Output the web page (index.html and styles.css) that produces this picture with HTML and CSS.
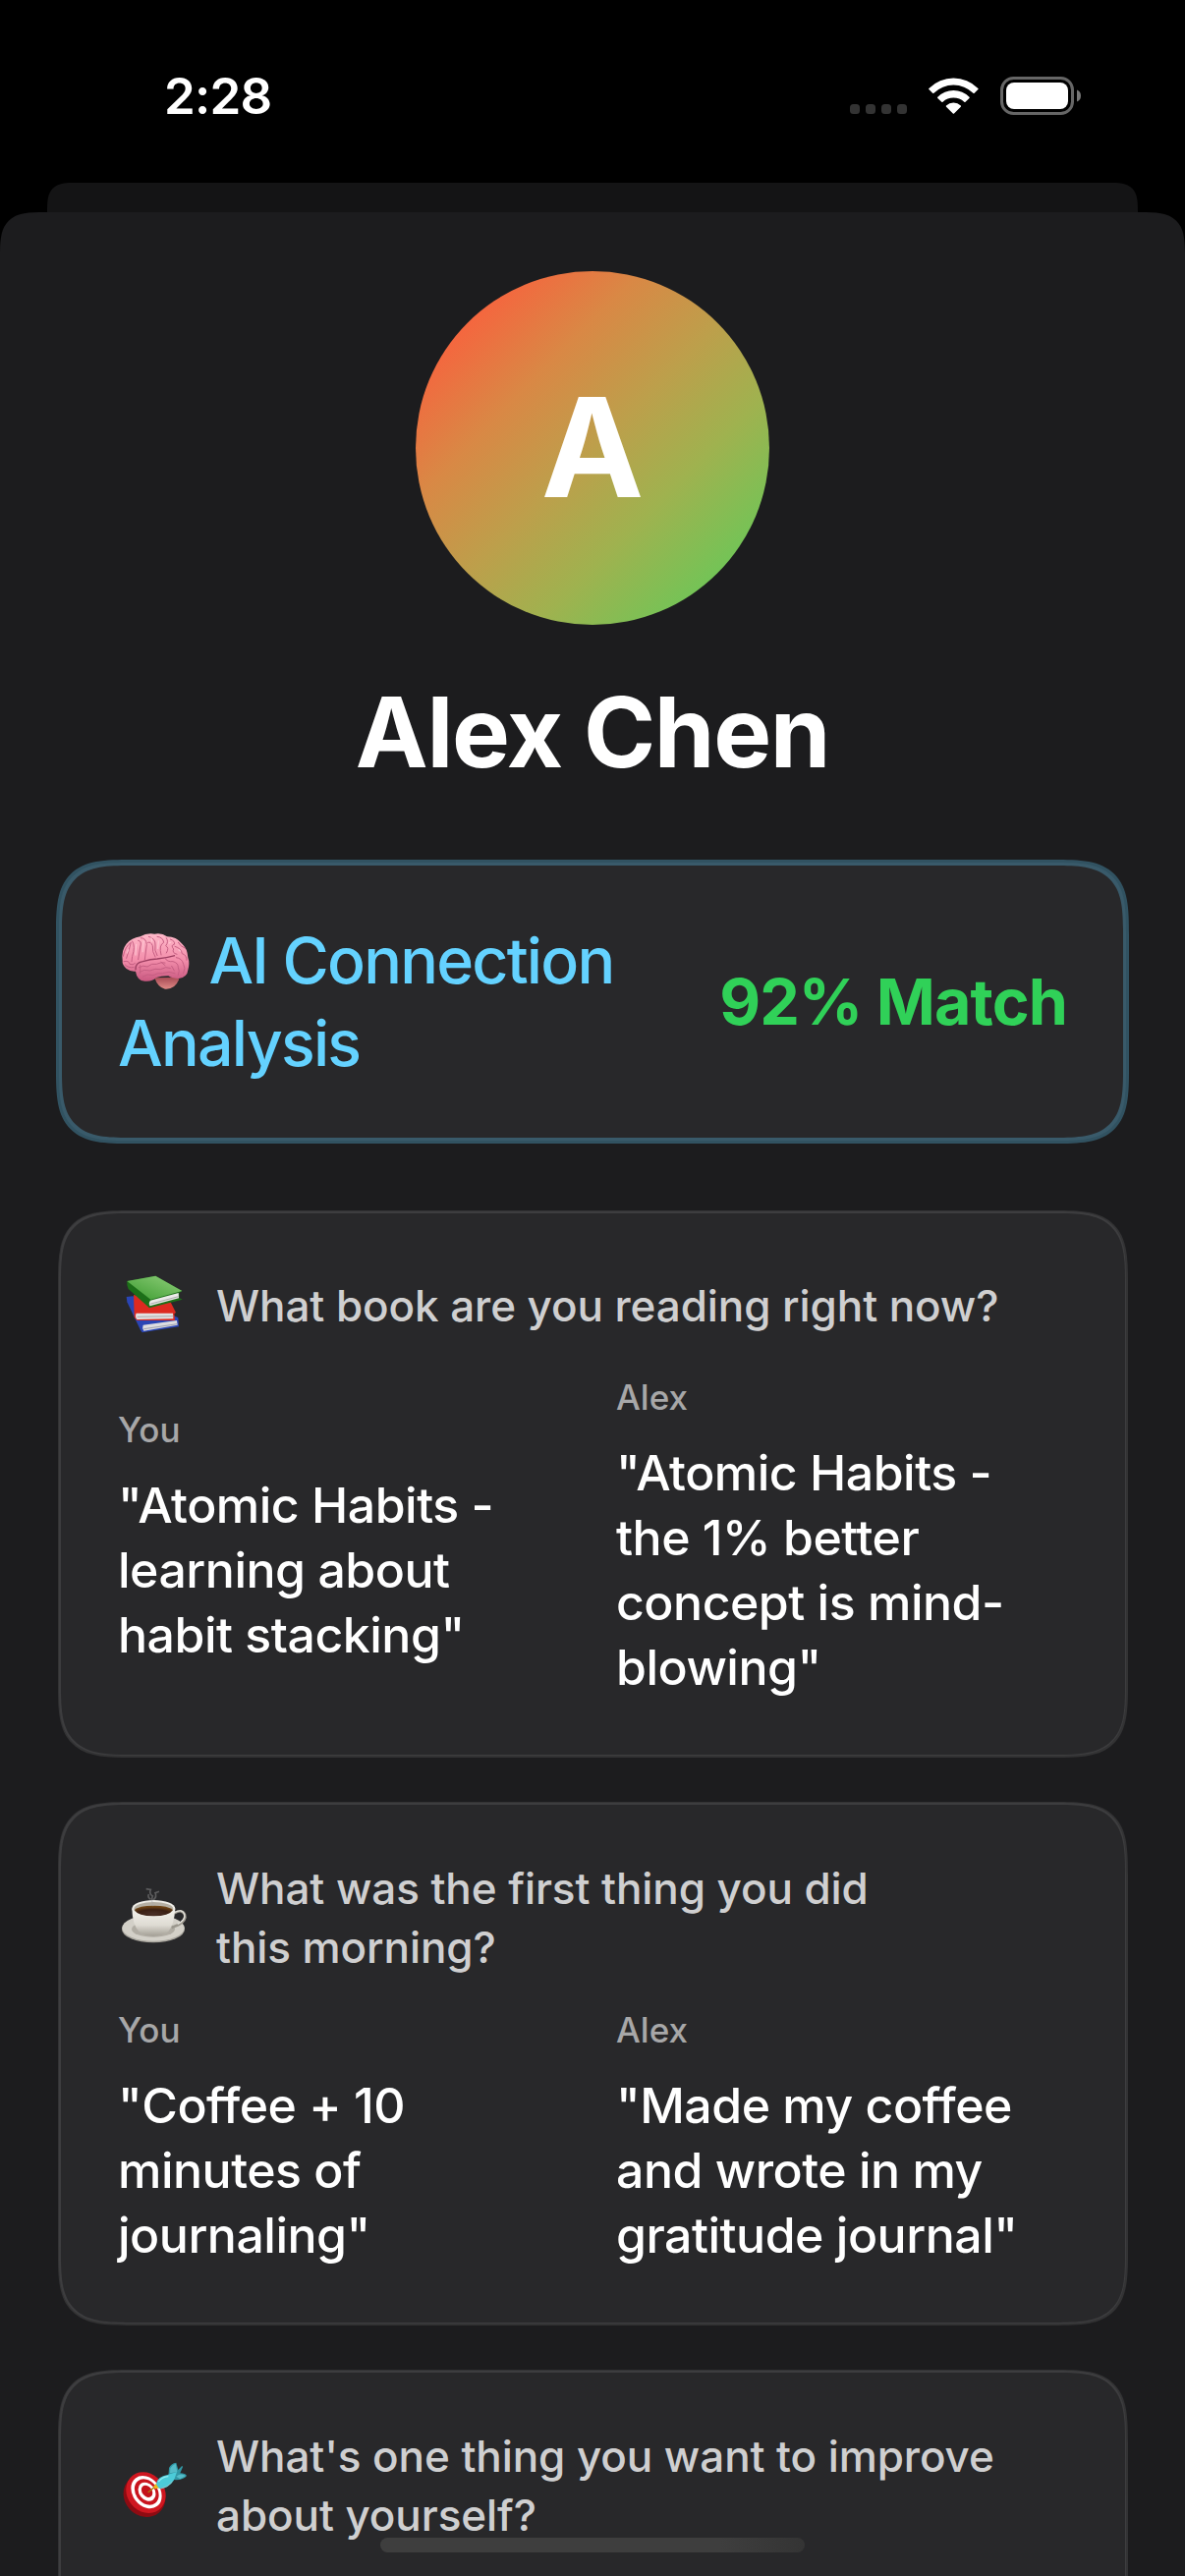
FILE: index.html
```
<!DOCTYPE html>
<html lang="en">
<head>
<meta charset="utf-8">
<title>Alex Chen</title>
<link rel="stylesheet" href="styles.css">
</head>
<body>
<div class="screen">
  <header class="status-bar">
    <span class="time">2:28</span>
    <svg class="status-icons" viewBox="0 0 235 39" width="235" height="39" aria-hidden="true">
      <g fill="#333">
        <rect x="0" y="28" width="10" height="10" rx="3.5"/>
        <rect x="16" y="28" width="10" height="10" rx="3.5"/>
        <rect x="32" y="28" width="10" height="10" rx="3.5"/>
        <rect x="48" y="28" width="10" height="10" rx="3.5"/>
      </g>
      <g fill="#fff" transform="translate(80 1)">
        <path d="M.4 10.9A35.5 35.5 0 0 1 50.4 10.9Q51 11.4 50.4 12L46.700 15.700Q46 16.200 45.400 15.700A28.500 28.500 0 0 0 5.400 15.700Q4.800 16.200 4.100 15.700L.4 12Q-.2 11.400 .4 10.900Z"/>
        <path d="M9.300 19.800A22.700 22.700 0 0 1 41.500 19.800Q42.100 20.300 41.500 20.900L37.500 24.800Q36.900 25.300 36.300 24.800A16.200 16.200 0 0 0 14.500 24.800Q13.900 25.300 13.300 24.800L9.300 20.900Q8.700 20.300 9.300 19.800Z"/>
        <path d="M18 28.500A10.500 10.500 0 0 1 32.800 28.500Q33.400 29 32.800 29.700L26 36.500Q25.400 37 24.800 36.500L18 29.700Q17.400 29 18 28.500Z"/>
      </g>
      <rect x="154.500" y="1.500" width="72" height="36" rx="12" fill="none" stroke="#666" stroke-width="3"/>
      <rect x="159" y="6" width="63" height="27" rx="8" fill="#fff"/>
      <path d="M231 13.500Q235 15 235 19.500T231 25.500Z" fill="#777"/>
    </svg>
  </header>
  <div class="sheet-behind"></div>
  <main class="sheet">
    <div class="avatar">A</div>
    <h1 class="name">Alex Chen</h1>

    <section class="card summary">
      <h2 class="summary-title"><svg class="brain" viewBox="30 57 231 177" width="77" height="59" aria-hidden="true">
        <defs>
          <linearGradient id="brainFill" x1="0" y1="0" x2="0" y2="1"><stop offset="0" stop-color="#ffb9c9"/><stop offset=".55" stop-color="#f38eab"/><stop offset="1" stop-color="#c95880"/></linearGradient>
          <linearGradient id="stemFill" x1="0" y1="0" x2="0" y2="1"><stop offset="0" stop-color="#a64a54"/><stop offset="1" stop-color="#e08a86"/></linearGradient>
        </defs>
        <path d="M142 196Q152 226 174 230Q204 232 216 202L214 194Z" fill="url(#stemFill)"/>
        <path d="M44 142Q40 112 56 92Q72 74 98 70Q118 58 142 62Q164 58 180 70Q208 70 226 92Q242 106 244 134Q250 150 244 172Q242 194 216 198Q196 198 184 190Q160 190 146 196Q136 208 112 206Q88 204 84 176Q70 178 56 168Q42 156 44 142Z" fill="url(#brainFill)"/>
        <path d="M84 172Q82 150 106 146Q130 138 150 138Q176 136 204 128" fill="none" stroke="#9d3f62" stroke-width="4"/>
        <g fill="none" stroke="#c65f83" stroke-width="3" stroke-linecap="round">
          <path d="M46 130Q52 100 70 88Q64 112 56 136M74 84Q84 100 74 130L72 146M92 82Q104 82 98 102L92 140M100 74Q116 74 118 94L112 140M122 88Q130 84 136 98Q134 116 144 132M124 70Q146 76 144 96Q140 110 150 128M150 70Q168 72 170 88Q154 96 162 126M178 74Q186 86 176 98Q188 104 178 120M190 78Q206 84 202 94Q190 96 200 108Q194 120 210 124M214 88Q220 100 236 106M204 100Q224 106 226 122Q240 126 240 142"/>
          <path d="M48 146Q64 142 66 154Q76 158 82 152M52 156Q60 166 78 164M94 164Q108 156 120 162Q134 150 148 154Q164 146 174 150M96 178Q110 168 128 174Q144 166 160 170Q176 160 190 166M106 192Q120 182 138 188Q150 180 166 182Q186 174 204 182M174 136Q180 148 198 146Q214 150 214 164Q220 174 214 188M208 134Q226 136 230 154Q238 166 230 182M98 158V182M162 148L174 158M194 160L202 174"/>
        </g>
        <g fill="none" stroke="#ffd0da" stroke-width="4" stroke-linecap="round" opacity=".7"><path d="M86 94L84 126M108 84L106 116M132 74L134 84M154 84L152 106M190 88L186 90M62 110L58 120M216 110L220 114"/></g>
      </svg> AI Connection<br>Analysis</h2>
      <strong class="match">92% Match</strong>
    </section>

    <section class="card">
      <div class="question">
        <svg class="emoji" viewBox="60 69 228 216" aria-hidden="true">
          <defs>
            <linearGradient id="greenCover" x1="0" y1="1" x2="1" y2="0"><stop offset="0" stop-color="#3a9a2f"/><stop offset="1" stop-color="#92d07c"/></linearGradient>
          </defs>
          <path d="M86 150L106 148L244 214L246 241L134 259L128 250L88 166Z" fill="#2a45b4"/>
          <path d="M137 236L240 222L242 236L139 254Q133 246 137 236Z" fill="#dcdce0"/>
          <path d="M139 248L241 233" stroke="#9da0ae" stroke-width="3"/>
          <path d="M108 144L220 164L237 198L232 202L234 222L118 222L110 212Z" fill="#dd2a20"/>
          <path d="M116 200L228 200L229 217L118 219Q111 210 116 200Z" fill="#e3e1e1"/>
          <path d="M119 211L229 209" stroke="#aaa" stroke-width="3"/>
          <path d="M88 102L175 86L256 132L247 138L248 154L257 158L156 184L92 126Q86 114 88 102Z" fill="#1c6f18"/>
          <path d="M88 102L175 86L256 132L160 158Z" fill="url(#greenCover)"/>
          <path d="M159 161L245 138L246 154L158 178Q152 170 159 161Z" fill="#ecebea"/>
          <path d="M158 172L245 149" stroke="#aaa" stroke-width="3"/>
        </svg>
        <p>What book are you reading right now?</p>
      </div>
      <div class="answers">
        <div class="answer"><span class="who">You</span><p>"Atomic Habits -<br>learning about<br>habit stacking"</p></div>
        <div class="answer"><span class="who">Alex</span><p>"Atomic Habits -<br>the 1% better<br>concept is mind-<br>blowing"</p></div>
      </div>
    </section>

    <section class="card">
      <div class="question">
        <svg class="emoji" viewBox="60 48 228 216" aria-hidden="true">
          <defs>
            <linearGradient id="cupFill" x1="0" y1="0" x2="0" y2="1"><stop offset="0" stop-color="#f4f2ec"/><stop offset=".6" stop-color="#dedbd3"/><stop offset="1" stop-color="#a39f95"/></linearGradient>
            <radialGradient id="coffeeFill" cx=".5" cy=".8" r=".7"><stop offset="0" stop-color="#4a3028"/><stop offset=".6" stop-color="#3a1f12"/><stop offset="1" stop-color="#6e4314"/></radialGradient>
          </defs>
          <ellipse cx="168" cy="191" rx="96" ry="41" fill="#a9a69e"/>
          <ellipse cx="168" cy="187" rx="95" ry="40" fill="#d3d0c8"/>
          <ellipse cx="168" cy="191" rx="66" ry="24" fill="#b1ada4"/>
          <path d="M232 142Q256 128 264 146Q270 164 244 178L224 186" fill="none" stroke="#9b978d" stroke-width="8"/>
          <path d="M232 140Q256 127 263 145Q268 162 242 175" fill="none" stroke="#e4e2dc" stroke-width="4"/>
          <path d="M103 128Q104 176 124 198Q140 212 168 212Q198 212 214 198Q232 176 235 128Z" fill="url(#cupFill)"/>
          <ellipse cx="169" cy="128" rx="66" ry="26" fill="#efede7"/>
          <ellipse cx="169" cy="129" rx="60" ry="21" fill="#b5afa3"/>
          <path d="M110 132Q124 119 169 119Q214 119 228 132Q216 151 169 151Q122 151 110 132Z" fill="url(#coffeeFill)"/>
          <path d="M169 120Q160 104 166 90Q154 82 160 70L146 68M168 102Q180 92 174 80L186 76M160 100Q150 94 154 84" fill="none" stroke="#aaa" stroke-width="5" opacity=".4"/>
        </svg>
        <p>What was the first thing you did<br>this morning?</p>
      </div>
      <div class="answers">
        <div class="answer"><span class="who">You</span><p>"Coffee + 10<br>minutes of<br>journaling"</p></div>
        <div class="answer"><span class="who">Alex</span><p>"Made my coffee<br>and wrote in my<br>gratitude journal"</p></div>
      </div>
    </section>

    <section class="card">
      <div class="question">
        <svg class="emoji" viewBox="60 42 228 216" aria-hidden="true">
          <ellipse cx="141" cy="181" rx="61" ry="68" transform="rotate(-42 141 181)" fill="#8e0b12"/>
          <g transform="rotate(-38 146 172)">
            <ellipse cx="146" cy="171" rx="57" ry="66" fill="#cf1720"/>
            <ellipse cx="148" cy="171" rx="42" ry="54" fill="#fff"/>
            <ellipse cx="149" cy="171" rx="33" ry="43" fill="#c9151e"/>
            <ellipse cx="150" cy="171" rx="24" ry="31" fill="#fff"/>
            <ellipse cx="151" cy="170" rx="15" ry="20" fill="#c4121b"/>
          </g>
          <path d="M152 171L176 151" stroke="#a8780c" stroke-width="4"/>
          <path d="M168 154L178 142L188 157L174 160Z" fill="#efb81a"/>
          <path d="M214 124L216 96Q222 82 238 80L244 102L256 89L258 93L250 112Q266 112 270 120Q262 132 236 133Z" fill="#3197a5"/>
          <path d="M177 146Q178 122 214 116L240 108L232 132Q214 160 186 159Z" fill="#4ccbd8"/>
          <path d="M219 112L220 97Q226 86 236 83L241 108ZM238 122Q252 110 267 120L250 130Z" fill="#55bcc8"/>
          <path d="M184 138Q194 124 214 122" fill="none" stroke="#93edf2" stroke-width="4"/>
          <path d="M190 160Q214 154 226 138" fill="none" stroke="#a9c9c8" stroke-width="2"/>
        </svg>
        <p>What's one thing you want to improve<br>about yourself?</p>
      </div>
      <div class="answers">
        <div class="answer"></div>
        <div class="answer"></div>
      </div>
    </section>
  </main>
  <div class="home-indicator"></div>
</div>
</body>
</html>
```
FILE: styles.css
```
* {
  box-sizing: border-box;
}

body {
  margin: 0;
  background: #000;
  color: #fff;
  font-family: Inter, "Liberation Sans", sans-serif;
}

h1,
h2,
p {
  margin: 0;
}

.screen {
  position: relative;
  display: flex;
  flex-direction: column;
  width: 1206px;
  height: 2622px;
  overflow: hidden;
  background: #000;
}

/* Status bar */
.status-bar {
  flex: none;
  display: flex;
  align-items: center;
  justify-content: space-between;
  height: 186px;
  padding: 60px 106px 51px 167px;
}

.time {
  font-size: 51px;
  font-weight: 600;
  line-height: 60px;
  letter-spacing: -0.8px;
}

/* Sheets */
.sheet-behind {
  flex: none;
  height: 30px;
  margin: 0 48px;
  border-radius: 30px 30px 0 0;
  background: #141415;
}

.sheet {
  flex: none;
  display: flex;
  flex-direction: column;
  height: 2700px;
  padding: 60px 60px 0;
  border-radius: 32px 32px 0 0;
  background: #1c1c1e;
}

.avatar {
  display: flex;
  align-items: center;
  justify-content: center;
  align-self: center;
  flex: none;
  width: 360px;
  height: 360px;
  padding-bottom: 2px;
  border-radius: 50%;
  background: linear-gradient(135deg, #f7633e 13%, #d98845 32%, #bd9f4b 50%, #9fb24f 67%, #70c557 87%);
  font-size: 140px;
  font-weight: 700;
}

.name {
  margin-top: 49px;
  font-size: 99px;
  font-weight: 700;
  line-height: 120px;
  letter-spacing: -1.3px;
  text-align: center;
}

/* Cards */
.card {
  position: relative;
  flex: none;
  margin-bottom: 48px;
  padding: 60px 60px 57px;
  border-radius: 50px;
  background: #28282a;
}

.card::after {
  content: "";
  position: absolute;
  inset: -1.5px;
  border: 3px solid rgba(255, 255, 255, 0.1);
  border-radius: 51px;
  pointer-events: none;
}

.summary {
  display: flex;
  align-items: center;
  justify-content: space-between;
  height: 283px;
  margin-top: 73px;
  margin-bottom: 72px;
  padding: 0 60px;
}

.summary::after {
  inset: -3px;
  border: 6px solid rgba(100, 210, 255, 0.3);
  border-radius: 53px;
}

@supports (corner-shape: superellipse(1.7)) {
  .card {
    border-radius: 73px;
    corner-shape: superellipse(1.7);
  }

  .card::after {
    border-radius: 75px;
    corner-shape: superellipse(1.7);
  }

  .summary::after {
    border-radius: 77px;
  }

  .sheet,
  .sheet-behind {
    border-radius: 46px 46px 0 0;
    corner-shape: superellipse(1.7);
  }
}

.summary-title {
  color: #64d2ff;
  font-size: 64.5px;
  font-weight: 500;
  line-height: 84px;
  letter-spacing: -1.8px;
  white-space: nowrap;
}

.brain {
  vertical-align: -7px;
}

.match {
  color: #30d158;
  font-size: 64.5px;
  font-weight: 700;
  line-height: 84px;
  letter-spacing: -0.9px;
}

.question {
  display: flex;
  align-items: center;
  gap: 24px;
  min-height: 72px;
}

.question p {
  margin: -3px 0;
  color: rgba(255, 255, 255, 0.8);
  font-size: 44px;
  font-weight: 450;
  line-height: 60px;
  letter-spacing: -0.08px;
  white-space: nowrap;
}

.emoji {
  flex: none;
  width: 76px;
  height: 72px;
}

.answers {
  display: grid;
  grid-template-columns: 1fr 1fr;
  align-items: center;
  gap: 48px;
  min-height: 120px;
  margin-top: 36px;
}

.answer {
  display: flex;
  flex-direction: column;
  gap: 22px;
}

.who {
  color: rgba(255, 255, 255, 0.6);
  font-size: 35px;
  font-weight: 450;
  line-height: 43px;
}

.answer p {
  font-size: 50px;
  font-weight: 500;
  line-height: 66px;
  letter-spacing: -0.5px;
  white-space: nowrap;
}

.home-indicator {
  position: absolute;
  top: 2583px;
  left: 387px;
  width: 432px;
  height: 15px;
  border-radius: 8px;
  background: linear-gradient(90deg, #3e3e3e 80%, #343434);
}
```
